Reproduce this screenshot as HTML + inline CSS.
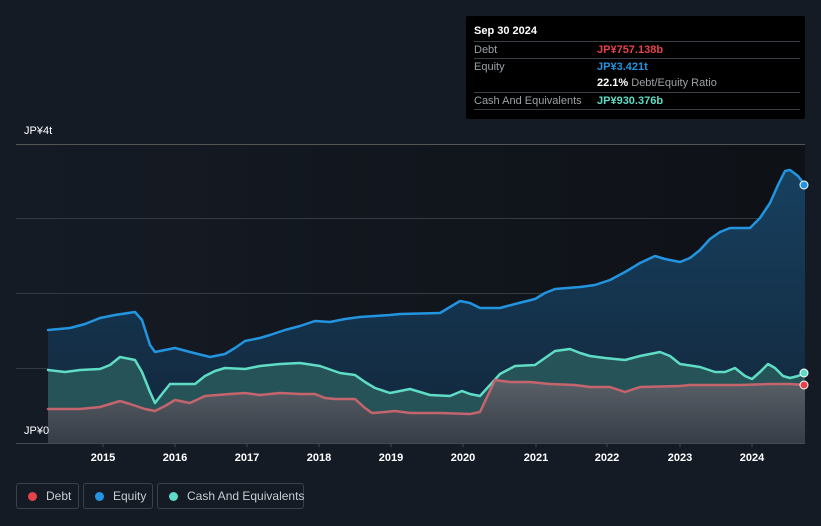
<!DOCTYPE html><html><head><style>
body{margin:0;width:821px;height:526px;background:#151b25;font-family:"Liberation Sans",sans-serif;overflow:hidden;position:relative}
.tt{position:absolute;left:466px;top:16px;width:339px;height:103px;background:#000;border-radius:2px}
.tt .h{position:absolute;left:8px;top:9px;color:#fff;font-size:11px;font-weight:bold}
.row{position:absolute;left:8px;width:326px;border-top:1px solid #3a3f45;font-size:11px;height:17px;line-height:16px;white-space:nowrap}
.row .l{position:absolute;left:0;color:#9ca1a7}.row .v{position:absolute;left:123px;font-weight:bold}
.lg{position:absolute;top:483px;height:26px;border:1px solid #3a414b;border-radius:3px;color:#c9ccd0;font-size:12px;line-height:24px;box-sizing:border-box;white-space:nowrap}
.lg i{position:absolute;left:11px;top:8px;width:9px;height:9px;border-radius:50%}
.lg span{position:absolute;left:29px}
.ax{position:absolute;color:#fff;font-size:11px}
</style></head><body>
<svg width="821" height="526" style="position:absolute;left:0;top:0">
<defs>
<linearGradient id="bg" x1="0" x2="1"><stop offset="0" stop-color="#151b25"/><stop offset="1" stop-color="#0e1116"/></linearGradient>
<linearGradient id="eq" x1="0" y1="0" x2="0" y2="1"><stop offset="0" stop-color="#17405f"/><stop offset="1" stop-color="#12263a"/></linearGradient>
<linearGradient id="ds" x1="0" y1="0" x2="0" y2="1"><stop offset="0" stop-color="#5a6068"/><stop offset="1" stop-color="#363d46"/></linearGradient>
</defs>
<rect x="16" y="144" width="789" height="299" fill="url(#bg)"/>
<g stroke="#333a44" stroke-width="1"><line x1="16" y1="144.5" x2="805" y2="144.5" stroke="#555"/><line x1="16" y1="218.5" x2="805" y2="218.5"/><line x1="16" y1="293.5" x2="805" y2="293.5"/><line x1="16" y1="368.5" x2="805" y2="368.5"/></g>
<path fill="url(#eq)" d="M48,330 L70,328 85,324 100,318 115,315 135,312 142,320 150,345 155,352 165,350 175,348 190,352 210,357 225,354 235,348 245,341 260,338 270,335 285,330 300,326 315,321 330,322 345,319 360,317 390,315 400,314 440,313 450,307 460,301 470,303 480,308 500,308 515,304 535,299 545,293 555,289 580,287 595,285 610,280 625,272 640,263 655,256 665,259 680,262 690,258 700,250 710,239 720,232 730,228 750,228 760,218 770,203 778,185 785,171 790,170 798,176 805,185 L805,443 48,443Z"/>
<path fill="#2a5a5c" fill-opacity="0.85" d="M48,370 L65,372 80,370 100,369 110,365 120,357 135,360 142,372 150,392 155,403 162,394 170,384 185,384 195,384 205,376 215,371 225,368 245,369 260,366 280,364 300,363 320,366 340,373 355,375 365,382 375,388 390,393 400,391 410,389 420,392 430,395 450,396 462,391 470,394 480,396 490,385 500,374 515,366 535,365 545,358 555,351 570,349 580,353 590,356 605,358 625,360 640,356 660,352 670,356 680,364 700,367 715,372 725,372 735,368 745,376 752,379 760,372 768,364 775,368 783,376 790,378 798,376 805,373 L805,443 48,443Z"/>
<path fill="url(#ds)" d="M48,409 L80,409 100,407 110,404 120,401 130,404 145,409 155,411 165,406 175,400 190,403 205,396 230,394 245,393 260,395 280,393 300,394 315,394 325,398 335,399 355,399 365,408 372,413 385,412 395,411 410,413 440,413 470,414 480,412 488,395 495,380 510,382 530,382 550,384 575,385 590,387 610,387 625,392 640,387 680,386 690,385 740,385 770,384 790,384 805,385 L805,443 48,443Z"/>
<g fill="none" stroke-width="2.5" stroke-linejoin="round" stroke-linecap="round">
<polyline stroke="#2394e0" points="48,330 70,328 85,324 100,318 115,315 135,312 142,320 150,345 155,352 165,350 175,348 190,352 210,357 225,354 235,348 245,341 260,338 270,335 285,330 300,326 315,321 330,322 345,319 360,317 390,315 400,314 440,313 450,307 460,301 470,303 480,308 500,308 515,304 535,299 545,293 555,289 580,287 595,285 610,280 625,272 640,263 655,256 665,259 680,262 690,258 700,250 710,239 720,232 730,228 750,228 760,218 770,203 778,185 785,171 790,170 798,176 805,185"/>
<polyline stroke="#5fdcc6" points="48,370 65,372 80,370 100,369 110,365 120,357 135,360 142,372 150,392 155,403 162,394 170,384 185,384 195,384 205,376 215,371 225,368 245,369 260,366 280,364 300,363 320,366 340,373 355,375 365,382 375,388 390,393 400,391 410,389 420,392 430,395 450,396 462,391 470,394 480,396 490,385 500,374 515,366 535,365 545,358 555,351 570,349 580,353 590,356 605,358 625,360 640,356 660,352 670,356 680,364 700,367 715,372 725,372 735,368 745,376 752,379 760,372 768,364 775,368 783,376 790,378 798,376 805,373"/>
<polyline stroke="#c4646d" points="48,409 80,409 100,407 110,404 120,401 130,404 145,409 155,411 165,406 175,400 190,403 205,396 230,394 245,393 260,395 280,393 300,394 315,394 325,398 335,399 355,399 365,408 372,413 385,412 395,411 410,413 440,413 470,414 480,412 488,395 495,380 510,382 530,382 550,384 575,385 590,387 610,387 625,392 640,387 680,386 690,385 740,385 770,384 790,384 805,385"/>
</g>
<circle cx="804" cy="185" r="4" fill="#2394e0" stroke="#fff" stroke-width="1"/>
<circle cx="804" cy="373" r="4" fill="#5fdcc6" stroke="#fff" stroke-width="1"/>
<circle cx="804" cy="385" r="4" fill="#e5434c" stroke="#fff" stroke-width="1"/>
<line x1="16" y1="443.5" x2="805" y2="443.5" stroke="#444b55"/>
<g stroke="#444b55"><line x1="103" y1="443" x2="103" y2="447"/><line x1="175" y1="443" x2="175" y2="447"/><line x1="247" y1="443" x2="247" y2="447"/><line x1="319" y1="443" x2="319" y2="447"/><line x1="391" y1="443" x2="391" y2="447"/><line x1="463" y1="443" x2="463" y2="447"/><line x1="536" y1="443" x2="536" y2="447"/><line x1="607" y1="443" x2="607" y2="447"/><line x1="680" y1="443" x2="680" y2="447"/><line x1="752" y1="443" x2="752" y2="447"/></g>
<g fill="#fff" font-size="11" font-weight="bold" text-anchor="middle" font-family="Liberation Sans,sans-serif">
<text x="103" y="461">2015</text><text x="175" y="461">2016</text><text x="247" y="461">2017</text><text x="319" y="461">2018</text><text x="391" y="461">2019</text><text x="463" y="461">2020</text><text x="536" y="461">2021</text><text x="607" y="461">2022</text><text x="680" y="461">2023</text><text x="752" y="461">2024</text></g>
</svg>
<div class="ax" style="left:24px;top:125px">JP¥4t</div>
<div class="ax" style="left:24px;top:425px">JP¥0</div>
<div class="tt"><div class="h">Sep 30 2024</div>
<div class="row" style="top:25px"><span class="l">Debt</span><span class="v" style="color:#e5434c">JP¥757.138b</span></div>
<div class="row" style="top:42px"><span class="l">Equity</span><span class="v" style="color:#2394e0">JP¥3.421t</span></div>
<div class="row" style="top:59px;border-top:none"><span class="v" style="color:#fff">22.1% <span style="color:#9ca1a7;font-weight:normal">Debt/Equity Ratio</span></span></div>
<div class="row" style="top:76px"><span class="l">Cash And Equivalents</span><span class="v" style="color:#5fdcc6">JP¥930.376b</span></div>
<div class="row" style="top:93px;height:0"></div>
</div>
<div class="lg" style="left:16px;width:63px"><i style="background:#e5434c"></i><span>Debt</span></div>
<div class="lg" style="left:83px;width:70px"><i style="background:#2394e0"></i><span>Equity</span></div>
<div class="lg" style="left:157px;width:147px"><i style="background:#5fdcc6"></i><span>Cash And Equivalents</span></div>
</body></html>
